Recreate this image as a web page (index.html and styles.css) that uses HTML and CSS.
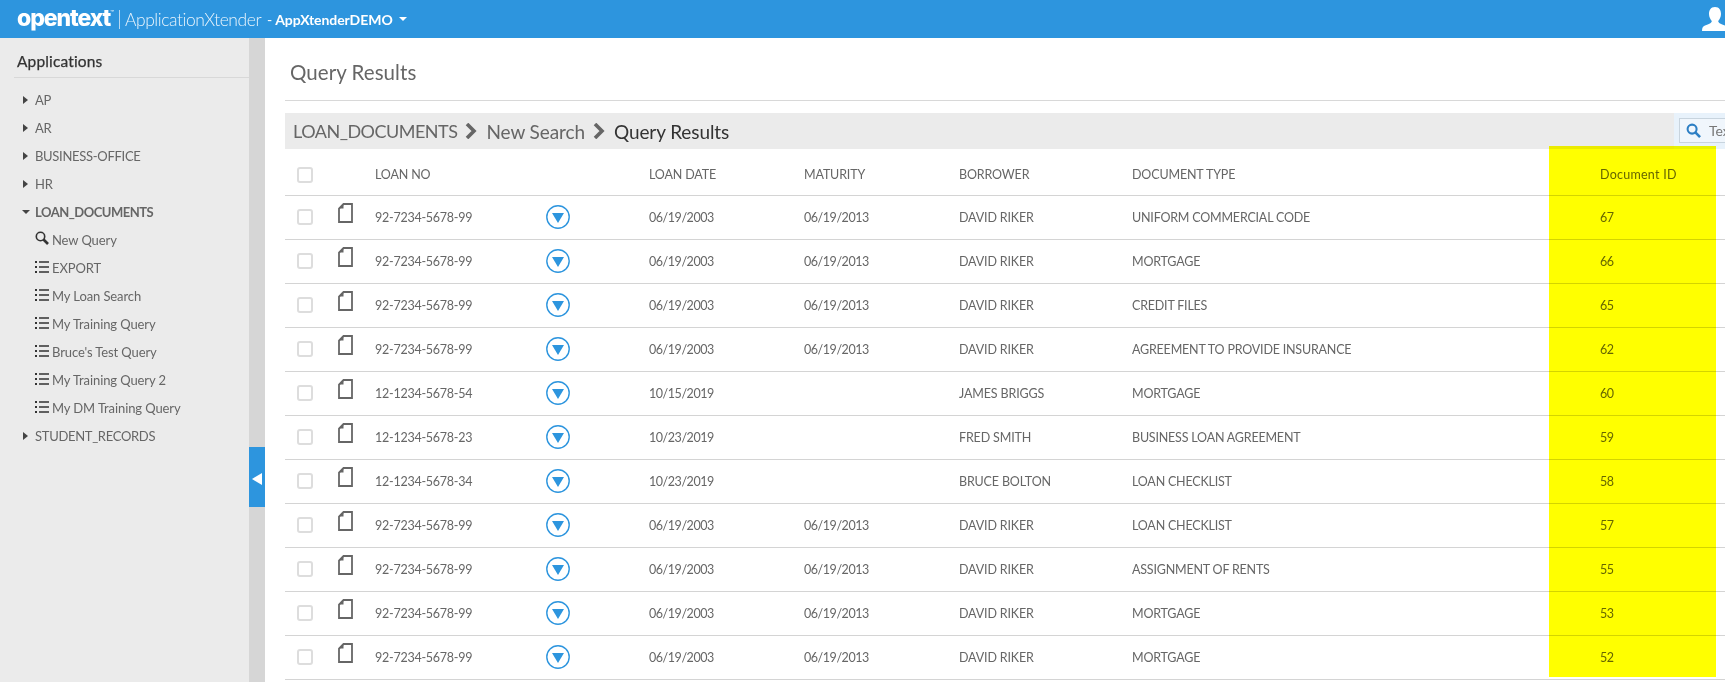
FILE: index.html
```html
<!DOCTYPE html>
<html lang="en">
<head>
<meta charset="utf-8">
<title>Query Results</title>
<link rel="stylesheet" href="styles.css">
</head>
<body>
<svg class="defs" width="0" height="0" aria-hidden="true">
  <symbol id="doc" viewBox="0 0 15 20"><path d="M5.5 1H14V19H1V5.5Z" fill="#fff" stroke="#666" stroke-width="1.8"/><path d="M5.5 1V5.5H1Z" fill="#666"/></symbol>
  <symbol id="menu" viewBox="0 0 24 24"><circle cx="12" cy="12" r="11.2" fill="#fff" stroke="#2d95de" stroke-width="1.4"/><path d="M6 8H18L12 18Z" fill="#2d95de"/></symbol>
  <symbol id="list" viewBox="0 0 14 12"><path d="M0 0H2V2H0ZM4 0.2H14V1.8H4ZM0 5H2V7H0ZM4 5.2H14V6.8H4ZM0 10H2V12H0ZM4 10.2H14V11.8H4Z" fill="#333"/></symbol>
  <symbol id="arrow" viewBox="0 0 5 8"><path d="M0 0L5 4L0 8Z" fill="#444"/></symbol>
  <symbol id="chev" viewBox="0 0 12 16"><path d="M2 1L9 8L2 15" fill="none" stroke="#666" stroke-width="3.6"/></symbol>
</svg>

<header class="topbar">
  <span class="logo">opentext<sup class="tm">™</sup></span>
  <span class="divider"></span>
  <span class="product">ApplicationXtender</span>
  <span class="dash">-</span>
  <span class="repo">AppXtenderDEMO</span>
  <span class="caret"></span>
  <svg class="user" viewBox="0 0 26 26" width="26" height="26"><path d="M13 1C8.5 1 7 4.5 7 8C7 11 8.5 13.5 9.8 15C9.8 17 7 18 3 19.5C1 20.3 0 21.5 0 25H26C26 21.5 25 20.3 23 19.5C19 18 16.2 17 16.2 15C17.5 13.5 19 11 19 8C19 4.5 17.5 1 13 1Z" fill="#fff"/></svg>
</header>

<div class="workspace">
  <aside class="sidebar">
    <h2 class="side-title">Applications</h2>
    <ul class="tree">
      <li class="node"><svg class="tw"><use href="#arrow"/></svg>AP</li>
      <li class="node"><svg class="tw"><use href="#arrow"/></svg>AR</li>
      <li class="node"><svg class="tw"><use href="#arrow"/></svg>BUSINESS-OFFICE</li>
      <li class="node"><svg class="tw"><use href="#arrow"/></svg>HR</li>
      <li class="node open"><span class="tw-open"></span>LOAN_DOCUMENTS</li>
      <li class="leaf"><svg class="leaf-icon search-leaf" viewBox="0 0 14 14"><circle cx="5.5" cy="5.5" r="4.2" fill="none" stroke="#333" stroke-width="1.6"/><path d="M8.5 8.5L13 13" stroke="#333" stroke-width="2.6"/></svg>New Query</li>
      <li class="leaf"><svg class="leaf-icon"><use href="#list"/></svg>EXPORT</li>
      <li class="leaf"><svg class="leaf-icon"><use href="#list"/></svg>My Loan Search</li>
      <li class="leaf"><svg class="leaf-icon"><use href="#list"/></svg>My Training Query</li>
      <li class="leaf"><svg class="leaf-icon"><use href="#list"/></svg>Bruce's Test Query</li>
      <li class="leaf"><svg class="leaf-icon"><use href="#list"/></svg>My Training Query 2</li>
      <li class="leaf"><svg class="leaf-icon"><use href="#list"/></svg>My DM Training Query</li>
      <li class="node"><svg class="tw"><use href="#arrow"/></svg>STUDENT_RECORDS</li>
    </ul>
  </aside>

  <div class="splitter"><button class="collapse" aria-label="Collapse"></button></div>

  <main class="main">
    <h1 class="page-title">Query Results</h1>
    <div class="crumbbar">
      <nav class="crumbs">
        <span class="root">LOAN_DOCUMENTS</span><svg class="chev"><use href="#chev"/></svg>
        <span>New Search</span><svg class="chev"><use href="#chev"/></svg>
        <span class="current">Query Results</span>
      </nav>
      <div class="searchwrap">
        <div class="search">
          <svg class="search-icon" viewBox="0 0 16 16"><circle cx="6.5" cy="6.5" r="4.8" fill="none" stroke="#2d7fc4" stroke-width="2.2"/><path d="M10 10L15 15" stroke="#2d7fc4" stroke-width="2.8"/></svg>
          <span class="search-text">Text</span>
        </div>
      </div>
    </div>
    <table class="results">
      <colgroup>
        <col class="c-check"><col class="c-doc"><col class="c-loan"><col class="c-menu"><col class="c-date"><col class="c-mat"><col class="c-bor"><col class="c-type"><col class="c-id">
      </colgroup>
      <thead>
        <tr><th class="check"><span class="box"></span></th><th></th><th>LOAN NO</th><th></th><th>LOAN DATE</th><th>MATURITY</th><th>BORROWER</th><th>DOCUMENT TYPE</th><th>Document ID</th></tr>
      </thead>
      <tbody>
        <tr><td class="check"><span class="box"></span></td><td><svg class="doc"><use href="#doc"/></svg></td><td class="loan">92-7234-5678-99</td><td><svg class="menu"><use href="#menu"/></svg></td><td class="num">06/19/2003</td><td class="num">06/19/2013</td><td>DAVID RIKER</td><td class="type">UNIFORM COMMERCIAL CODE</td><td class="num">67</td></tr>
        <tr><td class="check"><span class="box"></span></td><td><svg class="doc"><use href="#doc"/></svg></td><td class="loan">92-7234-5678-99</td><td><svg class="menu"><use href="#menu"/></svg></td><td class="num">06/19/2003</td><td class="num">06/19/2013</td><td>DAVID RIKER</td><td class="type">MORTGAGE</td><td class="num">66</td></tr>
        <tr><td class="check"><span class="box"></span></td><td><svg class="doc"><use href="#doc"/></svg></td><td class="loan">92-7234-5678-99</td><td><svg class="menu"><use href="#menu"/></svg></td><td class="num">06/19/2003</td><td class="num">06/19/2013</td><td>DAVID RIKER</td><td class="type">CREDIT FILES</td><td class="num">65</td></tr>
        <tr><td class="check"><span class="box"></span></td><td><svg class="doc"><use href="#doc"/></svg></td><td class="loan">92-7234-5678-99</td><td><svg class="menu"><use href="#menu"/></svg></td><td class="num">06/19/2003</td><td class="num">06/19/2013</td><td>DAVID RIKER</td><td class="type">AGREEMENT TO PROVIDE INSURANCE</td><td class="num">62</td></tr>
        <tr><td class="check"><span class="box"></span></td><td><svg class="doc"><use href="#doc"/></svg></td><td class="loan">12-1234-5678-54</td><td><svg class="menu"><use href="#menu"/></svg></td><td class="num">10/15/2019</td><td></td><td>JAMES BRIGGS</td><td class="type">MORTGAGE</td><td class="num">60</td></tr>
        <tr><td class="check"><span class="box"></span></td><td><svg class="doc"><use href="#doc"/></svg></td><td class="loan">12-1234-5678-23</td><td><svg class="menu"><use href="#menu"/></svg></td><td class="num">10/23/2019</td><td></td><td>FRED SMITH</td><td class="type">BUSINESS LOAN AGREEMENT</td><td class="num">59</td></tr>
        <tr><td class="check"><span class="box"></span></td><td><svg class="doc"><use href="#doc"/></svg></td><td class="loan">12-1234-5678-34</td><td><svg class="menu"><use href="#menu"/></svg></td><td class="num">10/23/2019</td><td></td><td>BRUCE BOLTON</td><td class="type">LOAN CHECKLIST</td><td class="num">58</td></tr>
        <tr><td class="check"><span class="box"></span></td><td><svg class="doc"><use href="#doc"/></svg></td><td class="loan">92-7234-5678-99</td><td><svg class="menu"><use href="#menu"/></svg></td><td class="num">06/19/2003</td><td class="num">06/19/2013</td><td>DAVID RIKER</td><td class="type">LOAN CHECKLIST</td><td class="num">57</td></tr>
        <tr><td class="check"><span class="box"></span></td><td><svg class="doc"><use href="#doc"/></svg></td><td class="loan">92-7234-5678-99</td><td><svg class="menu"><use href="#menu"/></svg></td><td class="num">06/19/2003</td><td class="num">06/19/2013</td><td>DAVID RIKER</td><td class="type">ASSIGNMENT OF RENTS</td><td class="num">55</td></tr>
        <tr><td class="check"><span class="box"></span></td><td><svg class="doc"><use href="#doc"/></svg></td><td class="loan">92-7234-5678-99</td><td><svg class="menu"><use href="#menu"/></svg></td><td class="num">06/19/2003</td><td class="num">06/19/2013</td><td>DAVID RIKER</td><td class="type">MORTGAGE</td><td class="num">53</td></tr>
        <tr><td class="check"><span class="box"></span></td><td><svg class="doc"><use href="#doc"/></svg></td><td class="loan">92-7234-5678-99</td><td><svg class="menu"><use href="#menu"/></svg></td><td class="num">06/19/2003</td><td class="num">06/19/2013</td><td>DAVID RIKER</td><td class="type">MORTGAGE</td><td class="num">52</td></tr>
      </tbody>
    </table>
  </main>
</div>
<div class="highlight"></div>
</body>
</html>
```

FILE: styles.css
```css
* { box-sizing: border-box; }
html, body { height: 100%; }
body {
  margin: 0;
  height: 682px;
  overflow: hidden;
  display: flex;
  flex-direction: column;
  background: #fff;
  color: #666;
  font-family: "Lato", "Noto Sans", sans-serif;
  font-size: 13px;
}
.defs { position: absolute; }

.topbar {
  flex: 0 0 38px;
  display: flex;
  align-items: center;
  padding-left: 17px;
  background: #2d95de;
  color: #fff;
  position: relative;
  overflow: hidden;
}
.logo {
  font-family: "Inter", sans-serif;
  font-weight: 800;
  font-size: 23px;
  letter-spacing: -1.1px;
  margin-top: -3px;
  width: 102px;
  white-space: nowrap;
}
.tm { font-size: 6px; font-weight: 400; vertical-align: 11px; line-height: 0; letter-spacing: 0; }
.divider { width: 1px; height: 19px; background: #b5d8f2; margin-right: 5px; }
.product { font-weight: 300; font-size: 17.5px; letter-spacing: -0.45px; width: 139px; white-space: nowrap; color: #e9f4fc; }
.dash { font-size: 14px; margin: 0 3px 0 3px; }
.repo { font-weight: 700; font-size: 14px; letter-spacing: -0.05px; }
.caret { margin-left: 6px; border: 4px solid transparent; border-top-color: #fff; border-bottom-width: 0; }
.user { position: absolute; right: -3px; top: 6px; }

.workspace { flex: 1; display: flex; min-height: 0; }
.sidebar { flex: 0 0 249px; background: #ebebeb; padding-left: 14px; }
.side-title {
  margin: 0;
  height: 40px;
  padding: 14px 0 0 3px;
  border-bottom: 1px solid #d8d8d8;
  font-size: 15.5px;
  font-weight: 400;
  line-height: 18px;
  letter-spacing: 0.15px;
  color: #333;
  -webkit-text-stroke: 0.25px #333;
}
.tree { list-style: none; margin: 8px 0 0; padding: 0; }
.node, .leaf { height: 28px; line-height: 28px; display: flex; align-items: center; white-space: nowrap; letter-spacing: -0.1px; }
.node { padding-left: 9px; letter-spacing: -0.3px; }
.tw { width: 5px; height: 8px; margin-right: 7px; }
.tw-open { width: 0; height: 0; border: 4px solid transparent; border-top-color: #444; border-bottom-width: 0; margin: 0 5px 0 -1px; }
.open { font-weight: 700; letter-spacing: -0.5px; }
.leaf { padding-left: 21px; }
.leaf-icon { width: 14px; height: 12px; margin-right: 3px; margin-top: -2px; }
.search-leaf { height: 14px; margin-top: -4px; }

.splitter { flex: 0 0 16px; background: #d6d6d6; position: relative; }
.collapse {
  position: absolute;
  left: 0;
  top: 409px;
  width: 16px;
  height: 60px;
  padding: 0;
  border: 0;
  background: #2d95de;
}
.collapse::after {
  content: "";
  position: absolute;
  left: 3px;
  top: 26px;
  border: 6px solid transparent;
  border-right: 10px solid #fff;
  border-left-width: 0;
}

.main { flex: 1; min-width: 0; padding-left: 20px; overflow: hidden; }
.page-title {
  margin: 0;
  height: 63px;
  padding: 21px 0 0 5px;
  border-bottom: 1px solid #d8d8d8;
  font-size: 20.5px;
  font-weight: 400;
  line-height: 26px;
  letter-spacing: 0.05px;
  color: #666;
}
.crumbbar { display: flex; height: 36px; margin-top: 12px; }
.crumbs {
  flex: 0 0 1389px;
  display: flex;
  align-items: center;
  padding-left: 8px;
  background: #ebebeb;
  font-size: 19px;
  white-space: nowrap;
  letter-spacing: -0.1px;
}
.root { font-size: 18px; letter-spacing: -0.5px; }
.chev { width: 12px; height: 16px; margin: 0 9px 0 8px; }
.current { color: #333; }
.searchwrap { flex: 1; background: #e8f2fb; padding: 5px; overflow: hidden; }
.search {
  width: 120px;
  height: 25px;
  display: flex;
  align-items: center;
  gap: 8px;
  padding-left: 6px;
  background: #f0f6fc;
  border: 1px solid #c8d4de;
  color: #777;
  font-size: 14px;
}
.search-icon { width: 15px; height: 15px; }

.results { border-collapse: collapse; table-layout: fixed; width: 1440px; }
.c-check { width: 48px; } .c-doc { width: 42px; } .c-loan { width: 171px; } .c-menu { width: 103px; }
.c-date, .c-mat { width: 155px; } .c-bor { width: 173px; } .c-type { width: 468px; } .c-id { width: 125px; }
.results th, .results td {
  padding: 0;
  text-align: left;
  font-weight: 400;
  font-size: 12.5px;
  white-space: nowrap;
  vertical-align: middle;
  border-bottom: 1px solid #d4d4d4;
  letter-spacing: -0.15px;
}
.results thead tr { height: 46px; }
.results th { padding-top: 6px; }
.results th:last-child { letter-spacing: 0.25px; }
.results tbody tr { height: 44px; }
.results .num { letter-spacing: -0.45px; }
.results .loan { letter-spacing: -0.25px; }
.results .type { letter-spacing: -0.2px; }
.results .check { padding-left: 12px; }
.box {
  display: block;
  width: 16px;
  height: 16px;
  border: 2px solid #ddd;
  border-radius: 3px;
  background: #fff;
}
.doc { display: block; width: 15px; height: 20px; margin: -8px 0 0 5px; }
.menu { display: block; width: 24px; height: 24px; }

.highlight {
  position: absolute;
  left: 1549px;
  top: 146px;
  width: 167px;
  height: 531px;
  background: #ff0;
  mix-blend-mode: multiply;
}
```
